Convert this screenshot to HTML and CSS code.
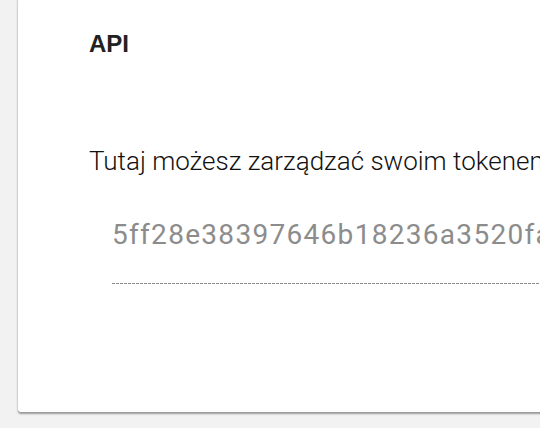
FILE: index.html
```html
<!DOCTYPE html>
<html lang="pl">
<head>
<meta charset="utf-8">
<link rel="stylesheet" href="styles.css">
</head>
<body>
<div class="card">
  <h2 class="title">API</h2>
  <p class="desc">Tutaj możesz zarządzać swoim tokenem API.</p>
  <div class="field">
    <div class="token">5ff28e38397646b18236a3520fa1c9d2</div>
    <div class="underline"></div>
  </div>
</div>
</body>
</html>
```
FILE: styles.css
```css
html, body {
  margin: 0;
  padding: 0;
  background: #f2f2f2;
  overflow: hidden;
  width: 540px;
  height: 428px;
}
.card {
  box-sizing: border-box;
  margin: -4px 0 0 18px;
  width: 820px;
  height: 416px;
  background: #ffffff;
  border-radius: 3px;
  box-shadow: 0 2px 2px rgba(0,0,0,0.35), 0 0 3px rgba(0,0,0,0.12);
  padding: 34px 0 0 71px;
  white-space: nowrap;
}
.title {
  margin: 0;
  font-family: "Liberation Sans", Arial, sans-serif;
  font-weight: bold;
  font-size: 24px;
  line-height: 28px;
  color: #222222;
}
.desc {
  margin: 88px 0 0 0;
  font-family: Roboto, sans-serif;
  font-weight: 300;
  font-size: 26px;
  line-height: 30px;
  color: #111111;
}
.field {
  margin: 43px 0 0 23px;
}
.token {
  font-family: Roboto, sans-serif;
  font-size: 28px;
  line-height: 32px;
  letter-spacing: 1.3px;
  color: #8c8c8c;
}
.underline {
  margin-top: 32px;
  height: 1px;
  background: repeating-linear-gradient(to right, #8a8a8a 0, #8a8a8a 3px, transparent 3px, transparent 4px);
}
```
